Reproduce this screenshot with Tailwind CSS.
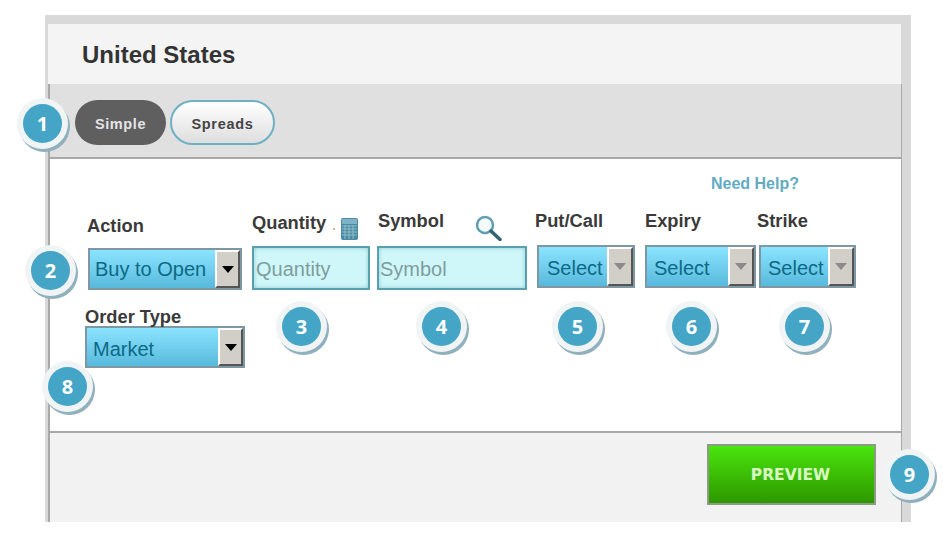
<!DOCTYPE html>
<html lang="en">
<head>
  <meta charset="UTF-8" />
  <title>Trade | United States</title>
  <script src="https://cdn.jsdelivr.net/npm/@tailwindcss/browser@4"></script>
</head>
<body class="bg-white font-['Liberation_Sans',Arial,sans-serif]">
  <div class="relative w-[943px] h-[541px] overflow-hidden">

    <!-- Panel -->
    <div class="ml-[45px] mt-[15px] w-[866px] h-[507px] inline-block align-top bg-[#d9d9d9] pt-[9px] pl-[3px] pr-[10px]">
      <div class="flex flex-col h-full">

        <!-- Title -->
        <div class="h-[60px] shrink-0 bg-[#f4f4f4] pl-[34px] text-[24px] leading-[62px] font-bold text-[#333]">United States</div>

        <!-- Tabs -->
        <div class="h-[75px] shrink-0 -mr-px bg-[#e0e0e0] border-l-2 border-r border-b-2 border-[#a8a8a8] pl-[25px] pt-[16px] flex gap-[4px]">
          <button class="w-[91px] h-[45px] pt-[5px] rounded-[23px] bg-[#5f5f5f] text-[14.5px] font-bold tracking-[0.6px] text-[#e4e4e4]">Simple</button>
          <button class="w-[105px] h-[45px] pt-[5px] rounded-[23px] border-2 border-[#6fb0c4] bg-linear-to-b from-white to-[#dedede] text-[14.5px] font-bold tracking-[0.7px] text-[#444]">Spreads</button>
        </div>

        <!-- Order form -->
        <div class="h-[274px] shrink-0 -mr-px bg-white border-l-2 border-r border-b-2 border-[#a8a8a8]">
          <div class="h-[49px] pt-[16px] pr-[102px] text-right text-[16px] leading-[18px] font-bold text-[#62abc2]">Need Help?</div>

          <div class="flex items-start pl-[38px]">
            <!-- Action -->
            <div class="w-[154px] mr-[10px]">
              <div class="h-[40px] -ml-px text-[18.3px] leading-[36px] font-bold text-[#3a3a3a]">Action</div>
              <div class="flex h-[42px] border-2 border-[#7d98a3] bg-linear-to-b from-[#8ae4ff] to-[#58b9dc]">
                <span class="flex-1 pl-[5px] text-[20px] leading-[39px] text-[#0c6a86]">Buy to Open</span>
                <span class="w-[25px] flex items-center justify-center bg-[#d2cec8] border-t-2 border-l-2 border-white border-r-2 border-r-[#555] border-b-2 border-b-[#555]">
                  <span class="w-0 h-0 border-x-[6px] border-x-transparent border-t-[7px] border-t-black"></span>
                </span>
              </div>
            </div>

            <!-- Quantity -->
            <div class="w-[118px] mr-[7px]">
              <div class="relative h-[38px] text-[18.3px] leading-[30px] font-bold text-[#3a3a3a]">
                Quantity
                <span class="absolute left-[81px] top-[20px] w-[2px] h-[2px] bg-[#d8b890]"></span>
                <svg class="absolute left-[89px] top-[10px]" width="17" height="22" viewBox="0 0 17 22">
                  <rect x="0" y="0" width="17" height="22" rx="2" fill="#4a8ba3"/>
                  <rect x="1" y="1" width="15" height="5" fill="#7fb2c4"/>
                  <path d="M1 8h15M1 11h15M1 14h15M1 17h15M4 7v14M8 7v14M12 7v14" stroke="#8fbccb" stroke-width="1"/>
                </svg>
              </div>
              <input type="text" placeholder="Quantity" class="block w-full h-[44px] pt-[2px] border-2 border-[#5a9fb0] bg-[#cff7fa] shadow-[inset_0_0_4px_#8fc8d0] pl-[2px] text-[20px] outline-none placeholder:text-[#7f9c9d]" />
            </div>

            <!-- Symbol -->
            <div class="w-[150px] mr-[10px]">
              <div class="relative h-[38px] text-[18.3px] leading-[26px] font-bold text-[#3a3a3a] pl-px">
                Symbol
                <svg class="absolute left-[97px] top-[6px]" width="28" height="27" viewBox="0 0 28 27" fill="none">
                  <circle cx="11" cy="11" r="8" stroke="#5f9eb0" stroke-width="2.5" fill="#f2fafb"/>
                  <path d="M17 17l9 8.5" stroke="#2f6373" stroke-width="3.5" stroke-linecap="round"/>
                </svg>
              </div>
              <input type="text" placeholder="Symbol" class="block w-full h-[44px] pt-[2px] border-2 border-[#5a9fb0] bg-[#cff7fa] shadow-[inset_0_0_4px_#8fc8d0] pl-px text-[20px] outline-none placeholder:text-[#7f9c9d]" />
            </div>

            <!-- Put/Call -->
            <div class="w-[98px] mr-[10px]">
              <div class="h-[37px] -ml-[2px] text-[18.3px] leading-[26px] font-bold text-[#3a3a3a]">Put/Call</div>
              <div class="flex h-[43px] border-2 border-[#7d98a3] bg-linear-to-b from-[#8ae4ff] to-[#58b9dc]">
                <span class="flex-1 pl-[8px] text-[20px] leading-[42px] text-[#0c6a86]">Select</span>
                <span class="w-[26px] flex items-center justify-center bg-[#d2cec8] border-t-2 border-l-2 border-white border-r-2 border-r-[#555] border-b-2 border-b-[#555]">
                  <span class="w-0 h-0 border-x-[6px] border-x-transparent border-t-[7px] border-t-[#8a8a8a]"></span>
                </span>
              </div>
            </div>

            <!-- Expiry -->
            <div class="w-[111px] mr-[3px]">
              <div class="h-[37px] text-[18.3px] leading-[26px] font-bold text-[#3a3a3a]">Expiry</div>
              <div class="flex h-[43px] border-2 border-[#7d98a3] bg-linear-to-b from-[#8ae4ff] to-[#58b9dc]">
                <span class="flex-1 pl-[7px] text-[20px] leading-[42px] text-[#0c6a86]">Select</span>
                <span class="w-[26px] flex items-center justify-center bg-[#d2cec8] border-t-2 border-l-2 border-white border-r-2 border-r-[#555] border-b-2 border-b-[#555]">
                  <span class="w-0 h-0 border-x-[6px] border-x-transparent border-t-[7px] border-t-[#8a8a8a]"></span>
                </span>
              </div>
            </div>

            <!-- Strike -->
            <div class="w-[97px]">
              <div class="h-[37px] -ml-[2px] text-[18.3px] leading-[26px] font-bold text-[#3a3a3a]">Strike</div>
              <div class="flex h-[43px] border-2 border-[#7d98a3] bg-linear-to-b from-[#8ae4ff] to-[#58b9dc]">
                <span class="flex-1 pl-[7px] text-[20px] leading-[42px] text-[#0c6a86]">Select</span>
                <span class="w-[26px] flex items-center justify-center bg-[#d2cec8] border-t-2 border-l-2 border-white border-r-2 border-r-[#555] border-b-2 border-b-[#555]">
                  <span class="w-0 h-0 border-x-[6px] border-x-transparent border-t-[7px] border-t-[#8a8a8a]"></span>
                </span>
              </div>
            </div>
          </div>

          <!-- Order Type -->
          <div class="w-[160px] ml-[35px] mt-[18px]">
            <div class="h-[18px] text-[18.3px] leading-[18px] font-bold text-[#3a3a3a]">Order Type</div>
            <div class="flex h-[42px] border-2 border-[#7d98a3] bg-linear-to-b from-[#8ae4ff] to-[#58b9dc]">
              <span class="flex-1 pl-[6px] text-[20px] leading-[42px] text-[#0c6a86]">Market</span>
              <span class="w-[25px] flex items-center justify-center bg-[#d2cec8] border-t-2 border-l-2 border-white border-r-2 border-r-[#555] border-b-2 border-b-[#555]">
                <span class="w-0 h-0 border-x-[6px] border-x-transparent border-t-[7px] border-t-black"></span>
              </span>
            </div>
          </div>
        </div>

        <!-- Footer -->
        <div class="flex-1 -mr-px bg-[#f2f2f2] border-l-2 border-r border-[#a8a8a8] pl-[657px] pt-[11px]">
          <button class="w-[169px] h-[61px] pt-[2px] pr-[2px] border-2 border-[#8c9c84] bg-linear-to-b from-[#4ae50f] to-[#2e9800] font-['DejaVu_Sans',sans-serif] text-[15.5px] font-bold text-[#d9f9c2]">PREVIEW</button>
        </div>
      </div>
    </div>

    <!-- Callout badges -->
    <span class="absolute left-[23px] top-[104px] w-[39px] h-[39px] rounded-full bg-[#44a5c6] shadow-[0_0_0_6px_#f1f4f5,2px_3px_0_6px_#8fb0bc] font-['Open_Sans',sans-serif] text-[20px] leading-[39px] text-center font-bold text-white">1</span>
    <span class="absolute left-[31px] top-[251px] w-[39px] h-[39px] rounded-full bg-[#44a5c6] shadow-[0_0_0_6px_#f1f4f5,2px_3px_0_6px_#8fb0bc] font-['Open_Sans',sans-serif] text-[20px] leading-[39px] text-center font-bold text-white">2</span>
    <span class="absolute left-[282px] top-[307px] w-[39px] h-[39px] rounded-full bg-[#44a5c6] shadow-[0_0_0_6px_#f1f4f5,2px_3px_0_6px_#8fb0bc] font-['Open_Sans',sans-serif] text-[20px] leading-[39px] text-center font-bold text-white">3</span>
    <span class="absolute left-[422px] top-[307px] w-[39px] h-[39px] rounded-full bg-[#44a5c6] shadow-[0_0_0_6px_#f1f4f5,2px_3px_0_6px_#8fb0bc] font-['Open_Sans',sans-serif] text-[20px] leading-[39px] text-center font-bold text-white">4</span>
    <span class="absolute left-[558px] top-[307px] w-[39px] h-[39px] rounded-full bg-[#44a5c6] shadow-[0_0_0_6px_#f1f4f5,2px_3px_0_6px_#8fb0bc] font-['Open_Sans',sans-serif] text-[20px] leading-[39px] text-center font-bold text-white">5</span>
    <span class="absolute left-[672px] top-[307px] w-[39px] h-[39px] rounded-full bg-[#44a5c6] shadow-[0_0_0_6px_#f1f4f5,2px_3px_0_6px_#8fb0bc] font-['Open_Sans',sans-serif] text-[20px] leading-[39px] text-center font-bold text-white">6</span>
    <span class="absolute left-[785px] top-[307px] w-[39px] h-[39px] rounded-full bg-[#44a5c6] shadow-[0_0_0_6px_#f1f4f5,2px_3px_0_6px_#8fb0bc] font-['Open_Sans',sans-serif] text-[20px] leading-[39px] text-center font-bold text-white">7</span>
    <span class="absolute left-[48px] top-[367px] w-[39px] h-[39px] rounded-full bg-[#44a5c6] shadow-[0_0_0_6px_#f1f4f5,2px_3px_0_6px_#8fb0bc] font-['Open_Sans',sans-serif] text-[20px] leading-[39px] text-center font-bold text-white">8</span>
    <span class="absolute left-[890px] top-[455px] w-[39px] h-[39px] rounded-full bg-[#44a5c6] shadow-[0_0_0_6px_#f1f4f5,2px_3px_0_6px_#8fb0bc] font-['Open_Sans',sans-serif] text-[20px] leading-[39px] text-center font-bold text-white">9</span>
  </div>
</body>
</html>
